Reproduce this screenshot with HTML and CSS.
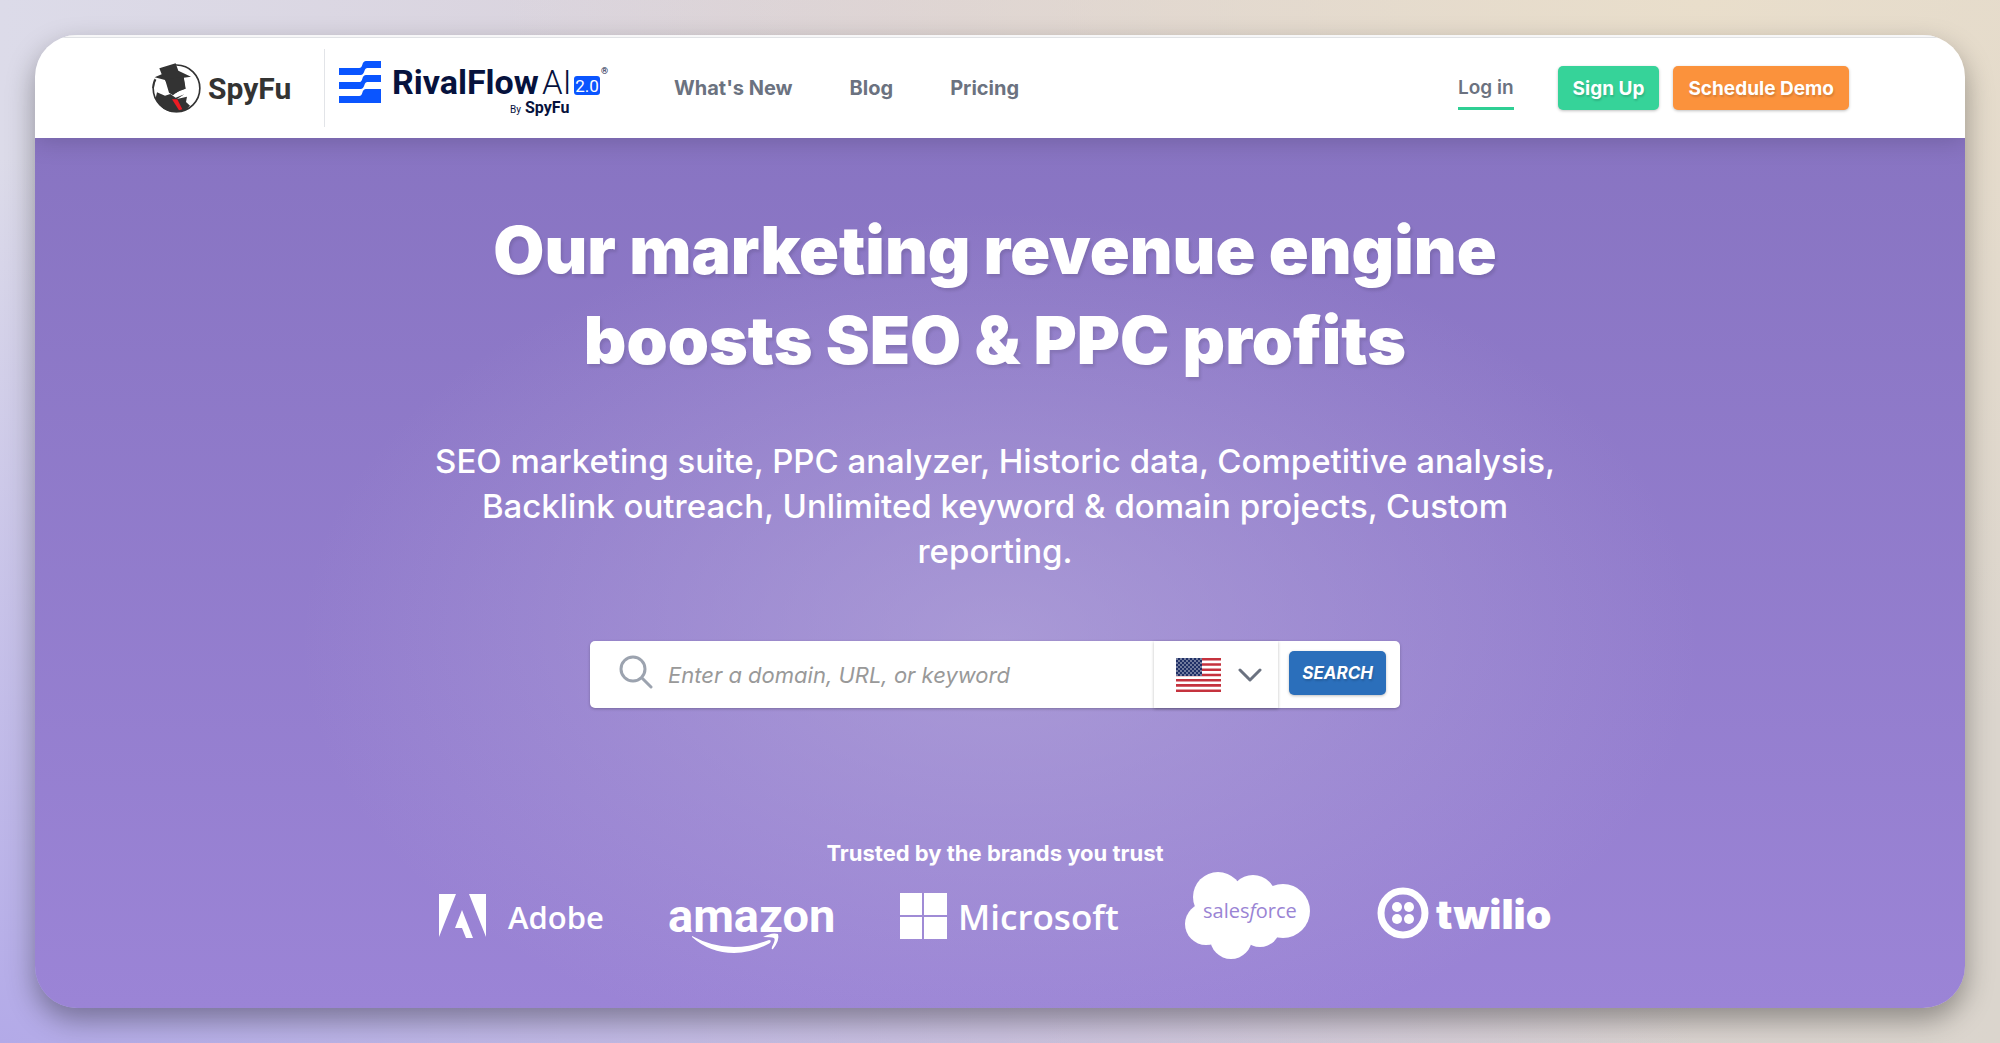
FILE: index.html
```html
<!DOCTYPE html>
<html lang="en">
<head>
    <meta charset="UTF-8">
    <meta name="viewport" content="width=device-width, initial-scale=1.0">
    <title>SpyFu</title>
    <link rel="stylesheet" href="styles.css">
</head>
<body>
    <div class="window">
        <header class="header">
            <a class="logo-spyfu" href="#" aria-label="SpyFu">
                <svg width="49" height="50" viewBox="37 39 147 150">
                    <circle cx="110.500" cy="115" r="70" fill="#fff" stroke="#333" stroke-width="5"/>
                    <path d="M42 36H108L112 66L50 98L36 70Z" fill="#fff"/>
                    <path d="M59 55L108 40L116 62L154 80L132 83L137 116L124 119L108 130L96 124L76 90L45 82L66 73Z" fill="#333"/>
                    <path d="M40 114Q42 98 48 88" fill="none" stroke="#333" stroke-width="5"/>
                    <path d="M76 88L132 80L138 116L112 126L100 136L88 128Z" fill="#333"/>
                    <path d="M52 127L76 137L92 132L108 143L134 133L112 147L142 140L139 156L151 167Q134 187 110 187Q66 187 48 145Z" fill="#333"/>
                    <path d="M97 148H113L128 178L118 181Z" fill="#ed1c24"/>
                </svg>
                <span>SpyFu</span>
            </a>
            <a class="logo-rivalflow" href="#" aria-label="RivalFlow AI 2.0 by SpyFu">
                <svg width="270" height="62" viewBox="0 0 270 62">
                    <g transform="translate(-9 -7) scale(.3333)" fill="#0a55ff">
                        <path d="M27 54H88Q94 54 97 44Q100 33 108 33H153V54H112Q106 54 103 64Q100 75 92 75H27Z"/>
                        <path d="M27 96H88Q94 96 97 86Q100 75 108 75H153V96H112Q106 96 103 106Q100 117 92 117H27Z"/>
                        <path d="M27 138H88Q94 138 97 128Q100 117 108 117H153V159H27Z"/>
                    </g>
                    <text class="rf-bold" x="53" y="37">RivalFlow</text>
                    <text class="rf-light" x="203" y="37">AI</text>
                    <rect x="235" y="19" width="26" height="19" rx="3" fill="#0a55ff"/>
                    <text class="rf-version" x="248" y="35">2.0</text>
                    <text class="rf-mark" x="262" y="17">®</text>
                    <text class="rf-by" x="171" y="56">By</text>
                    <text class="rf-sub" x="186" y="56">SpyFu</text>
                </svg>
            </a>
            <nav class="nav">
                <a href="#">What's New</a>
                <a href="#">Blog</a>
                <a href="#">Pricing</a>
            </nav>
            <div class="account">
                <a class="login" href="#">Log in</a>
                <button class="btn btn-green" type="button">Sign Up</button>
                <button class="btn btn-orange" type="button">Schedule Demo</button>
            </div>
        </header>

        <main class="hero">
            <h1>Our marketing revenue engine boosts SEO &amp; PPC profits</h1>
            <p class="subtitle">SEO marketing suite, PPC analyzer, Historic data, Competitive analysis, Backlink outreach, Unlimited keyword &amp; domain projects, Custom reporting.</p>

            <form class="search">
                <svg class="search-icon" width="34" height="34" viewBox="0 0 34 34" fill="none" stroke="#9ca3af" stroke-width="3" stroke-linecap="round">
                    <circle cx="14" cy="14" r="12"/>
                    <path d="M23 23L32 32"/>
                </svg>
                <input type="text" aria-label="Domain, URL, or keyword" placeholder="Enter a domain, URL, or keyword">
                <div class="country">
                    <svg width="45" height="34" viewBox="0 0 45 34">
                        <defs>
                            <pattern id="stars" width="4" height="4" patternUnits="userSpaceOnUse">
                                <circle cx="1" cy="1" r=".7" fill="#fff"/>
                                <circle cx="3" cy="3" r=".7" fill="#fff"/>
                            </pattern>
                        </defs>
                        <rect width="45" height="34" fill="#fff"/>
                        <path d="M0 1.300H45M0 6.500H45M0 11.700H45M0 17H45M0 22.200H45M0 27.400H45M0 32.700H45" stroke="#c5323e" stroke-width="2.600"/>
                        <rect width="26" height="18" fill="#1f2f66"/>
                        <rect width="26" height="18" fill="url(#stars)"/>
                    </svg>
                    <svg width="24" height="14" viewBox="0 0 24 14" fill="none" stroke="#6b7280" stroke-width="3" stroke-linecap="round" stroke-linejoin="round">
                        <path d="M2 2L12 12L22 2"/>
                    </svg>
                    <select aria-label="Country">
                        <option>United States</option>
                        <option>United Kingdom</option>
                    </select>
                </div>
                <button class="btn btn-blue" type="submit">SEARCH</button>
            </form>

            <p class="trusted">Trusted by the brands you trust</p>
            <div class="brands">
                <svg width="163" height="46" viewBox="0 0 163 46" fill="#fff">
                    <path d="M0 1H17L0 44ZM30 1H47V44ZM23 17L34 45H27L23 35H16Z"/>
                    <text class="adobe" x="69" y="36">Adobe</text>
                </svg>
                <svg width="164" height="74" viewBox="0 0 164 74" fill="#fff">
                    <text class="amazon" x="-1" y="53">amazon</text>
                    <path d="M23 57Q60 77 100 61Q103 61 101 64Q83 74 65 74Q41 74 23 58Z"/>
                    <path d="M94 58Q103 53 109 55Q111 61 104 70Q102 71 103 68Q107 60 105 59Q102 58 94 58Z"/>
                </svg>
                <svg width="218" height="46" viewBox="0 0 218 46" fill="#fff">
                    <path d="M0 0H22V22H0ZM24 0H47V22H24ZM0 24H22V46H0ZM24 24H47V46H24Z"/>
                    <text class="microsoft" x="58" y="37">Microsoft</text>
                </svg>
                <svg width="125" height="87" viewBox="0 0 125 87" fill="#fff">
                    <circle cx="33" cy="25" r="25"/>
                    <circle cx="68" cy="26" r="23"/>
                    <circle cx="98" cy="39" r="27"/>
                    <circle cx="21" cy="52" r="21"/>
                    <circle cx="46" cy="66" r="21"/>
                    <circle cx="75" cy="55" r="20"/>
                    <path d="M20 30H95V55H20Z"/>
                    <text class="salesforce" x="18" y="46">sales<tspan class="slanted">f</tspan>orce</text>
                </svg>
                <svg width="175" height="58" viewBox="0 0 175 58" fill="#fff">
                    <circle cx="26" cy="26" r="22" fill="none" stroke="#fff" stroke-width="7"/>
                    <circle cx="20" cy="20" r="5"/>
                    <circle cx="32" cy="20" r="5"/>
                    <circle cx="20" cy="32" r="5"/>
                    <circle cx="32" cy="32" r="5"/>
                    <text class="twilio" x="59" y="42">twilio</text>
                </svg>
            </div>
        </main>
    </div>
</body>
</html>
```
FILE: styles.css
```css
* {
    box-sizing: border-box;
}

body {
    font-family: Inter, "Liberation Sans", sans-serif;
    margin: 0;
    padding: 35px;
    min-height: 100vh;
    display: flex;
    background:
        radial-gradient(ellipse at 0% 100%, #b3aae8 0%, rgba(179, 170, 232, 0) 60%),
        radial-gradient(ellipse at 85% 0%, #e9decb 0%, rgba(233, 222, 203, 0) 50%),
        linear-gradient(to right, #dcdbe9, #d9d0d8 45%, #dbd5cd);
}

a {
    color: inherit;
    text-decoration: none;
}

.window {
    flex: 1;
    display: flex;
    flex-direction: column;
    border-radius: 42px;
    overflow: hidden;
    box-shadow: 0 12px 28px rgba(0, 0, 0, 0.35);
}

/* Header */
.header {
    display: flex;
    align-items: center;
    height: 103px;
    padding: 3px 116px 0 117px;
    background-color: #fff;
    box-shadow: inset 0 2px #f7f7f8, inset 0 3px #e0e2e5, 0 2px 24px rgba(0, 0, 0, 0.18);
    position: relative;
}

.logo-spyfu {
    display: flex;
    align-items: center;
    gap: 7px;
    height: 78px;
    width: 173px;
    border-right: 1px solid #e2e4e8;
    font-family: Roboto, sans-serif;
    font-size: 30px;
    font-weight: 700;
    color: #333;
}

.logo-rivalflow {
    display: flex;
    margin-left: 14px;
    color: #06123d;
}

.logo-rivalflow text {
    font-family: Roboto, sans-serif;
    fill: #06123d;
}

.logo-rivalflow .rf-bold {
    font-size: 34px;
    font-weight: 700;
}

.logo-rivalflow .rf-light {
    font-size: 33px;
    font-weight: 300;
}

.logo-rivalflow .rf-version {
    font-size: 17px;
    text-anchor: middle;
    fill: #fff;
}

.logo-rivalflow .rf-mark {
    font-size: 9px;
}

.logo-rivalflow .rf-by {
    font-size: 10px;
}

.logo-rivalflow .rf-sub {
    font-size: 16px;
    font-weight: 700;
}

.nav {
    display: flex;
    gap: 57px;
    margin-left: 65px;
    font-size: 20px;
    font-weight: 700;
    color: #6b7280;
}

.account {
    display: flex;
    align-items: center;
    gap: 14px;
    margin-left: auto;
}

.login {
    height: 44px;
    line-height: 44px;
    margin-right: 30px;
    border-bottom: 3px solid #2fcf94;
    font-size: 19px;
    font-weight: 600;
    color: #6b7280;
}

.btn {
    height: 44px;
    padding: 0 15px;
    border: none;
    border-radius: 5px;
    font-family: inherit;
    font-size: 19px;
    font-weight: 700;
    color: #fff;
    text-shadow: 1px 2px 2px rgba(0, 0, 0, 0.15);
    box-shadow: 0 1px 3px rgba(0, 0, 0, 0.25);
    cursor: pointer;
}

.btn-green {
    background-color: #36d399;
}

.btn-orange {
    background-color: #fb923c;
}

.btn-blue {
    margin: 0 14px 4px 11px;
    padding: 0 13px;
    background-color: #2b6fbb;
    font-size: 17px;
    font-style: italic;
}

/* Hero */
.hero {
    flex: 1;
    display: flex;
    flex-direction: column;
    align-items: center;
    padding: 67px 10px 49px 0;
    color: #fff;
    text-align: center;
    background:
        radial-gradient(ellipse 700px 430px at 50% 58%, rgba(184, 172, 220, 0.6), rgba(184, 172, 220, 0)),
        linear-gradient(#8874c2, #9b84d6);
}

h1 {
    max-width: 1150px;
    margin: 0;
    font-size: 66px;
    line-height: 90px;
    font-weight: 900;
    text-shadow: 2px 3px 3px rgba(0, 0, 0, 0.1);
}

.subtitle {
    max-width: 1150px;
    margin: 54px 0 67px;
    font-size: 33px;
    line-height: 45px;
    font-weight: 500;
}

.search {
    display: flex;
    align-items: center;
    width: 810px;
    max-width: 100%;
    height: 67px;
    padding-left: 29px;
    border-radius: 5px;
    background-color: #fff;
    box-shadow: 0 1px 3px rgba(0, 0, 0, 0.25);
}

.search-icon {
    margin-bottom: 6px;
}

.search input {
    flex: 1;
    min-width: 0;
    height: 100%;
    padding: 0 15px;
    border: none;
    outline: none;
    background: none;
    font-family: inherit;
    font-size: 22px;
    font-style: italic;
}

.search input::placeholder {
    color: #999;
}

.country {
    position: relative;
    display: flex;
    align-items: center;
    gap: 17px;
    height: 100%;
    padding: 0 16px 0 22px;
    box-shadow: 0 1px 3px rgba(0, 0, 0, 0.25);
}

/* The native list covers the flag and arrow, so a click anywhere opens it */
.country select {
    position: absolute;
    inset: 0;
    width: 100%;
    opacity: 0;
    cursor: pointer;
}

.trusted {
    margin: 131px 0 5px;
    font-size: 22px;
    line-height: 28px;
    font-weight: 700;
}

.brands {
    display: flex;
    align-items: center;
    gap: 67px;
}

.brands svg {
    overflow: visible;
}

.adobe {
    font: 600 31px "Open Sans", sans-serif;
}

.amazon {
    font: 700 47px Roboto, sans-serif;
}

.microsoft {
    font: 600 35px "Open Sans", sans-serif;
}

.salesforce {
    font: 400 20px "Open Sans", sans-serif;
    fill: #9a84d4;
}

.slanted {
    font-style: italic;
}

.twilio {
    font: 900 41px Inter, sans-serif;
}
```
